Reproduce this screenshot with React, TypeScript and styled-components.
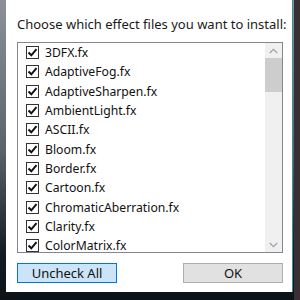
import React from 'react';
import styled, { createGlobalStyle } from 'styled-components';

const GlobalStyle = createGlobalStyle`
  html, body {
    margin: 0;
    padding: 0;
    width: 300px;
    height: 300px;
    overflow: hidden;
    background: #0f151c;
  }
`;

const Desktop = styled.div`
  width: 300px;
  height: 300px;
  display: flex;
  align-items: flex-start;
  background:
    linear-gradient(90deg, transparent 0 294px, #3a3034 294px 300px),
    linear-gradient(180deg, #8c9198 0%, #5a626a 50%, #121a22 85%, #0d1218 100%);
`;

const Dialog = styled.div`
  margin-left: 6px;
  width: 287px;
  height: 292px;
  box-sizing: border-box;
  background: #ffffff;
  border-right: 1px solid #3d8f9c;
  padding: 14px 10px 0 11px;
  display: flex;
  flex-direction: column;
  font-family: 'Noto Sans', 'Liberation Sans', sans-serif;
  color: #000;
`;

const Prompt = styled.div`
  font-size: 13px;
  line-height: 20px;
  height: 20px;
  white-space: nowrap;
  color: #1a1a1a;
`;

const ListBox = styled.div`
  margin-top: 8px;
  width: 266px;
  height: 211px;
  box-sizing: border-box;
  border: 1px solid #828790;
  display: flex;
  overflow: hidden;
`;

const Items = styled.div`
  flex: 1;
  display: flex;
  flex-direction: column;
  overflow: hidden;
`;

const Row = styled.div`
  height: 19.3px;
  flex: none;
  display: flex;
  align-items: center;
  padding-left: 8px;
  gap: 6px;
  font-size: 12.2px;
  color: #111;
  white-space: nowrap;
`;

const Box = styled.span`
  width: 13px;
  height: 13px;
  box-sizing: border-box;
  border: 1px solid #333;
  background: #fff;
  display: flex;
  align-items: center;
  justify-content: center;
  flex: none;
`;

const ScrollBar = styled.div`
  width: 17px;
  flex: none;
  background: #f0f0f0;
  display: flex;
  flex-direction: column;
`;

const Arrow = styled.div`
  height: 15px;
  display: flex;
  align-items: center;
  justify-content: center;
`;

const Thumb = styled.div`
  height: 34px;
  background: #cdcdcd;
`;

const Track = styled.div`
  flex: 1;
`;

const Footer = styled.div`
  margin-top: 10px;
  width: 266px;
  display: flex;
  justify-content: space-between;
`;

const Button = styled.button<{ $focused?: boolean }>`
  width: 100px;
  height: 20px;
  box-sizing: border-box;
  padding: 0;
  border: 1px solid ${(p) => (p.$focused ? '#0078d7' : '#adadad')};
  background: ${(p) => (p.$focused ? '#cce4f7' : '#e1e1e1')};
  font-family: 'Noto Sans', 'Liberation Sans', sans-serif;
  font-size: 13px;
  line-height: 18px;
  color: #111;
`;

const files = [
  '3DFX.fx',
  'AdaptiveFog.fx',
  'AdaptiveSharpen.fx',
  'AmbientLight.fx',
  'ASCII.fx',
  'Bloom.fx',
  'Border.fx',
  'Cartoon.fx',
  'ChromaticAberration.fx',
  'Clarity.fx',
  'ColorMatrix.fx',
];

const Check = () => (
  <svg width="11" height="11" viewBox="0 0 11 11">
    <path d="M1.5 5.5 L4.3 8.3 L9.5 2.2" fill="none" stroke="#111" strokeWidth="2" />
  </svg>
);

const Chevron = ({ up }: { up?: boolean }) => (
  <svg width="9" height="6" viewBox="0 0 9 6">
    <path
      d={up ? 'M0.8 5 L4.5 1.3 L8.2 5' : 'M0.8 1 L4.5 4.7 L8.2 1'}
      fill="none"
      stroke="#a0a0a0"
      strokeWidth="1.2"
    />
  </svg>
);

export default function App() {
  return (
    <Desktop>
      <GlobalStyle />
      <Dialog>
        <Prompt>Choose which effect files you want to install:</Prompt>
        <ListBox>
          <Items>
            {files.map((f) => (
              <Row key={f}>
                <Box>
                  <Check />
                </Box>
                {f}
              </Row>
            ))}
          </Items>
          <ScrollBar>
            <Arrow>
              <Chevron up />
            </Arrow>
            <Thumb />
            <Track />
            <Arrow>
              <Chevron />
            </Arrow>
          </ScrollBar>
        </ListBox>
        <Footer>
          <Button $focused>Uncheck All</Button>
          <Button>OK</Button>
        </Footer>
      </Dialog>
    </Desktop>
  );
}
